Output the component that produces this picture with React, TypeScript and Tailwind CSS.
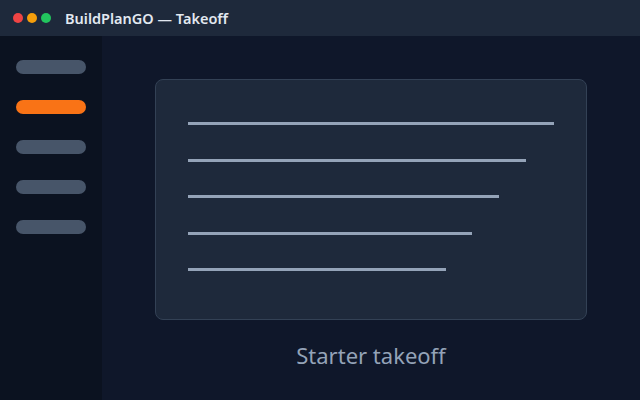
import React from 'react';

const navItems = [false, true, false, false, false];
const lineWidths = [366, 338, 311, 284, 258];

export default function App() {
  return (
    <div
      className="w-[640px] h-[400px] flex flex-col bg-[#0f172a] overflow-hidden"
      style={{ fontFamily: '"Noto Sans", "Open Sans", sans-serif' }}
    >
      {/* Title bar */}
      <div className="h-[36px] shrink-0 bg-[#1e293b] flex items-center pl-[13px]">
        <div className="flex items-center gap-[4px]">
          <span className="w-[10px] h-[10px] rounded-full bg-[#ef4444]" />
          <span className="w-[10px] h-[10px] rounded-full bg-[#f59e0b]" />
          <span className="w-[10px] h-[10px] rounded-full bg-[#22c55e]" />
        </div>
        <span className="ml-[14px] text-[14.5px] font-semibold text-[#e2e8f0] leading-none">
          BuildPlanGO — Takeoff
        </span>
      </div>

      <div className="flex flex-1 min-h-0">
        {/* Sidebar */}
        <div className="w-[102px] shrink-0 bg-[#0b1220] flex flex-col gap-[26px] pt-[24px] pl-[16px]">
          {navItems.map((active, i) => (
            <div
              key={i}
              className={`w-[70px] h-[14px] rounded-full ${active ? 'bg-[#f97316]' : 'bg-[#475569]'}`}
            />
          ))}
        </div>

        {/* Main */}
        <div className="flex-1 flex flex-col items-center pt-[43px]">
          <div className="w-[432px] h-[241px] rounded-[8px] border border-[#334155] bg-[#1e293b] flex flex-col gap-[33.5px] pt-[42px] pl-[32px]">
            {lineWidths.map((w, i) => (
              <div key={i} className="h-[3px] bg-[#94a3b8]" style={{ width: w }} />
            ))}
          </div>
          <div className="mt-[21px] text-[22px] leading-[28px] text-[#94a3b8]">Starter takeoff</div>
        </div>
      </div>
    </div>
  );
}
